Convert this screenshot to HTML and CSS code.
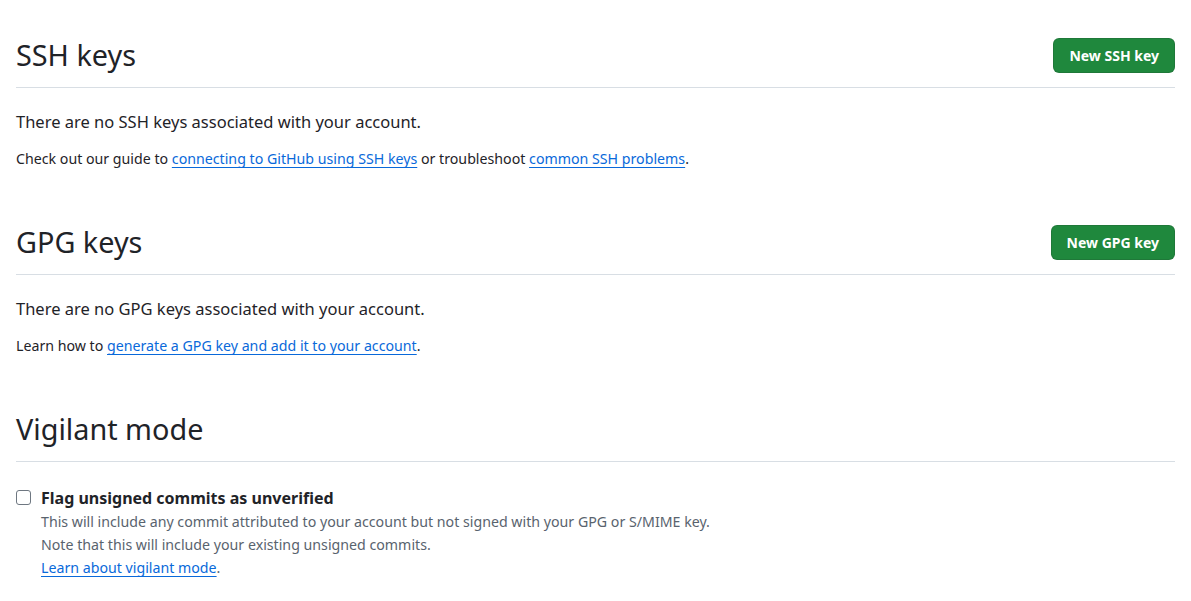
FILE: index.html
```html
<!DOCTYPE html>
<html lang="en">
<head>
<meta charset="utf-8">
<title>SSH and GPG keys</title>
<link rel="stylesheet" href="styles.css">
</head>
<body>
<main class="page">
  <section class="section">
    <div class="subhead">
      <h2 class="subhead-heading">SSH keys</h2>
      <a class="btn-primary" href="#">New SSH key</a>
    </div>
    <p class="lead">There are no SSH keys associated with your account.</p>
    <p class="note">Check out our guide to <a class="link" href="#">connecting to GitHub using SSH keys</a> or troubleshoot <a class="link" href="#">common SSH problems</a>.</p>
  </section>

  <section class="section">
    <div class="subhead">
      <h2 class="subhead-heading">GPG keys</h2>
      <a class="btn-primary" href="#">New GPG key</a>
    </div>
    <p class="lead">There are no GPG keys associated with your account.</p>
    <p class="note">Learn how to <a class="link" href="#">generate a GPG key and add it to your account</a>.</p>
  </section>

  <section class="section">
    <div class="subhead">
      <h2 class="subhead-heading">Vigilant mode</h2>
    </div>
    <div class="check-row">
      <input type="checkbox" class="checkbox" id="vigilant">
      <div class="check-body">
        <label class="check-label" for="vigilant">Flag unsigned commits as unverified</label>
        <p class="check-note">This will include any commit attributed to your account but not signed with your GPG or S/MIME key.</p>
        <p class="check-note">Note that this will include your existing unsigned commits.</p>
        <p class="check-note"><a class="link" href="#">Learn about vigilant mode</a>.</p>
      </div>
    </div>
  </section>
</main>
</body>
</html>
```
FILE: styles.css
```css
* { box-sizing: border-box; }
html, body { margin: 0; padding: 0; background: #ffffff; }
body {
  font-family: "Noto Sans", "Liberation Sans", sans-serif;
  color: #1f2328;
}
.page {
  padding: 37px 16px 0 16px;
}
.section {
  margin-bottom: 53px;
}
.section:last-child {
  margin-bottom: 0;
}
.subhead {
  display: flex;
  align-items: center;
  justify-content: space-between;
  border-bottom: 1px solid #d8dee4;
  padding-bottom: 14px;
  margin-bottom: 22px;
  min-height: 50px;
}
.subhead-heading {
  margin: 0;
  font-size: 28.8px;
  font-weight: 400;
  line-height: 36px;
}
.btn-primary {
  display: inline-flex;
  align-items: center;
  height: 35px;
  padding: 0 15px;
  background: #1f883d;
  color: #ffffff;
  border: 1px solid rgba(31, 35, 40, 0.15);
  border-radius: 6px;
  font-size: 14px;
  font-weight: 700;
  text-decoration: none;
}
.lead {
  margin: 0 0 13px 0;
  font-size: 16.5px;
  line-height: 24px;
}
.note {
  margin: 0;
  font-size: 14.2px;
  line-height: 24px;
}
.link {
  color: #0969da;
  text-decoration: underline;
  text-underline-offset: 3px;
  text-decoration-thickness: 1px;
}
.check-row {
  display: flex;
  align-items: flex-start;
  gap: 10px;
  padding-top: 2px;
}
.checkbox {
  appearance: none;
  -webkit-appearance: none;
  width: 15px;
  height: 15px;
  margin: 4px 0 0 0;
  border: 1px solid #6e7781;
  border-radius: 3px;
  background: #ffffff;
  flex: 0 0 auto;
}
.check-label {
  display: block;
  font-size: 16px;
  font-weight: 700;
  line-height: 24px;
}
.check-note {
  margin: 0;
  font-size: 14.2px;
  line-height: 23px;
  color: #59636e;
}
```
